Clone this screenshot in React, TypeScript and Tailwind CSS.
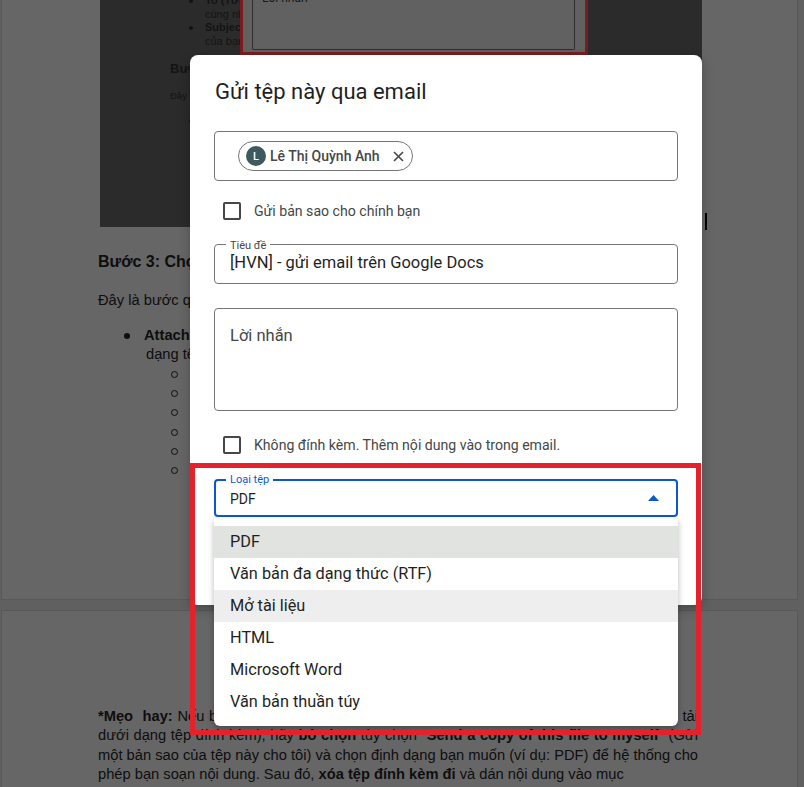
import React from "react";

const menuItems = [
  { label: "PDF", bg: "bg-[#e1e3e1]" },
  { label: "Văn bản đa dạng thức (RTF)", bg: "bg-white" },
  { label: "Mở tài liệu", bg: "bg-[#eeeeee]" },
  { label: "HTML", bg: "bg-white" },
  { label: "Microsoft Word", bg: "bg-white" },
  { label: "Văn bản thuần túy", bg: "bg-white" },
];

function Dot() {
  return <span className="block shrink-0 w-[4px] h-[4px] rounded-full bg-[#141414]" />;
}

function ImageBlock() {
  return (
    <div className="ml-[2px] w-[602px] h-[227px] bg-[#2b2b2b] flex overflow-hidden shrink-0">
      <div className="w-[140px] h-full overflow-hidden pl-[70px] text-[#141414] shrink-0">
        <div className="mt-[-6px] text-[11px] leading-[13.7px] whitespace-nowrap">
          <div className="flex items-center h-[13.7px]">
            <span className="block shrink-0 w-[19px]" />
            <Dot />
            <span className="ml-[12px] shrink-0 font-bold">To (Tới): Nhập địa chỉ email</span>
          </div>
          <div className="h-[13.7px] pl-[35px]">cùng nhận tài liệu</div>
          <div className="flex items-center h-[13.7px]">
            <span className="block shrink-0 w-[19px]" />
            <Dot />
            <span className="ml-[12px] shrink-0 font-bold">Subject (Tiêu đề)</span>
          </div>
          <div className="h-[13.7px] pl-[35px]">của bạn</div>
        </div>
        <div className="mt-[12px] h-[16px] leading-[16px] text-[13px] font-bold whitespace-nowrap">Bước 2: Soạn email</div>
        <div className="mt-[13px] h-[12px] leading-[12px] text-[9.5px] whitespace-nowrap">Đây là nơi bạn nhập nội dung</div>
        <div className="mt-[13px] h-[12px] flex items-center">
          <span className="block shrink-0 w-[19px]" />
          <Dot />
        </div>
      </div>
      <div className="w-[348px] h-[55px] border-[3px] border-t-0 border-[#7a1c20] bg-[#616161] shrink-0">
        <div className="ml-[9px] mr-[10px] h-[50px] border border-t-0 border-[#2e2e2e] rounded-b-[2px] overflow-hidden">
          <div className="mt-[-9px] pl-[9px] text-[12px] leading-[14px] text-[#1a1a1a] font-['Roboto',sans-serif]">Lời nhắn</div>
        </div>
      </div>
    </div>
  );
}

function Checkbox({ label, className }: { label: string; className?: string }) {
  return (
    <div className={`h-[40px] flex items-center pl-[9px] ${className ?? ""}`}>
      <span className="block shrink-0 w-[18px] h-[18px] border-2 border-[#444746] rounded-[2px]" />
      <span className="ml-[13px] text-[14.1px] leading-[20px] text-[#444746]">{label}</span>
    </div>
  );
}

function Dialog() {
  return (
    <div className="absolute left-[190px] top-[55px] w-[512px] h-[550px] bg-white rounded-[8px] px-[24px] font-['Roboto',sans-serif] shadow-[0_4px_12px_rgba(0,0,0,0.25)]">
      <div className="mt-[23px] h-[28px] text-[22px] leading-[28px] text-[#1f1f1f] pl-[1px]">Gửi tệp này qua email</div>

      <div className="mt-[25px] h-[50px] rounded-[4px] border border-[#747775] flex items-center pl-[23px]">
        <div className="flex items-center h-[30px] rounded-full border border-[#747775] pl-[7px] pr-[8px]">
          <div className="w-[20px] h-[20px] rounded-full bg-[#3e5a5f] text-white text-[11px] leading-none flex items-center justify-center font-medium">
            L
          </div>
          <span className="ml-[4px] text-[14px] leading-[20px] font-medium text-[#444746]">Lê Thị Quỳnh Anh</span>
          <svg className="ml-[13px]" width="11" height="11" viewBox="0 0 11 11">
            <path d="M1 1 L10 10 M10 1 L1 10" stroke="#444746" strokeWidth="1.6" />
          </svg>
        </div>
      </div>

      <Checkbox className="mt-[10px]" label="Gửi bản sao cho chính bạn" />

      <div className="relative mt-[13px] h-[40px] rounded-[4px] border border-[#747775] pl-[15px] pt-[8px]">
        <span className="absolute top-[-6px] left-[11px] px-[4px] bg-white text-[11px] leading-[13px] text-[#444746]">Tiêu đề</span>
        <div className="text-[16.5px] leading-[20px] text-[#1f1f1f]">[HVN] - gửi email trên Google Docs</div>
      </div>

      <div className="mt-[24px] h-[103px] rounded-[4px] border border-[#747775] pl-[15px] pt-[17px]">
        <div className="text-[16.5px] leading-[20px] text-[#444746]">Lời nhắn</div>
      </div>

      <Checkbox className="mt-[14px]" label="Không đính kèm. Thêm nội dung vào trong email." />

      <div className="relative mt-[14px]">
        <div className="relative h-[38px] rounded-[4px] border-2 border-[#0b57d0] flex items-center justify-between pl-[14px] pr-[17px]">
          <span className="absolute top-[-8px] left-[10px] px-[4px] bg-white text-[11px] leading-[13px] text-[#0b57d0]">Loại tệp</span>
          <span className="mt-[2px] text-[14px] leading-[20px] text-[#1f1f1f]">PDF</span>
          <svg width="11" height="6" viewBox="0 0 11 6">
            <path d="M0 6 L5.5 0 L11 6 Z" fill="#0b57d0" />
          </svg>
        </div>
        <div className="absolute top-[39px] left-0 w-[464px] bg-white rounded-b-[6px] py-[8px] shadow-[0_3px_6px_rgba(0,0,0,0.28)] z-10">
          {menuItems.map((it) => (
            <div key={it.label} className={`h-[32px] flex items-center pl-[16px] text-[16.3px] text-[#1f1f1f] ${it.bg}`}>
              {it.label}
            </div>
          ))}
        </div>
      </div>
    </div>
  );
}

export default function App() {
  const bodyText = "text-[14.7px] leading-[19.3px] text-[#0e0e0e]";
  return (
    <div className="relative w-[804px] h-[787px] overflow-hidden bg-[#606060] font-['Liberation_Sans',Arial,sans-serif]">
      {/* Page 1 */}
      <div className="ml-[1px] w-[797px] h-[600px] bg-[#666666] border-x border-b border-[#595959] pl-[96px] overflow-hidden">
        <div className="flex items-end">
          <ImageBlock />
          <span className="block ml-[3px] w-[2px] h-[17px] bg-black relative top-[3px]" />
        </div>
        <div className="mt-[25px] h-[20px] leading-[20px] text-[16px] font-bold text-[#0e0e0e] whitespace-nowrap">
          Bước 3: Chọn định dạng tệp đính kèm
        </div>
        <div className="mt-[18px] h-[20px] leading-[20px] text-[14.7px] text-[#0e0e0e] whitespace-nowrap">
          Đây là bước quan trọng để nội dung tài liệu hiển thị đúng trong email.
        </div>
        <div className={`mt-[16px] ${bodyText}`}>
          <div className="flex items-center h-[19.3px]">
            <span className="block shrink-0 w-[26px]" />
            <span className="block shrink-0 w-[6px] h-[6px] rounded-full bg-[#0e0e0e]" />
            <span className="ml-[14px] font-bold whitespace-nowrap">Attachment (Tệp đính kèm):</span>
          </div>
          <div className="h-[19.3px] pl-[48px] whitespace-nowrap">dạng tệp mà bạn muốn gửi:</div>
          {["PDF", "Văn bản đa dạng thức (RTF)", "Mở tài liệu", "HTML", "Microsoft Word", "Văn bản thuần túy"].map((t) => (
            <div key={t} className="flex items-center h-[19.3px]">
              <span className="block shrink-0 w-[73px]" />
              <span className="block shrink-0 w-[7px] h-[7px] rounded-full border border-[#0e0e0e]" />
              <span className="ml-[13px] whitespace-nowrap">{t}</span>
            </div>
          ))}
        </div>
      </div>

      {/* Page 2 */}
      <div className="mt-[10px] ml-[1px] w-[797px] h-[200px] bg-[#666666] border border-[#595959] pl-[96px] pt-[96px]">
        <div className={`w-[600px] ${bodyText}`}>
          <div className="h-[19.3px] overflow-hidden text-justify [text-align-last:justify]">
            <b>*Mẹo&nbsp; hay:</b> Nếu bạn muốn gửi nội dung tài liệu ngay trong phần thân của email (thay vì tải
          </div>
          <div className="h-[19.3px] overflow-hidden text-justify [text-align-last:justify]">
            dưới dạng tệp đính kèm), hãy <b>bỏ chọn</b> tùy chọn "<b>Send a copy of this file to myself</b>" (Gửi
          </div>
          <div className="h-[19.3px] overflow-hidden text-justify [text-align-last:justify]">
            một bản sao của tệp này cho tôi) và chọn định dạng bạn muốn (ví dụ: PDF) để hệ thống cho
          </div>
          <div className="h-[19.3px] overflow-hidden whitespace-nowrap">
            phép bạn soạn nội dung. Sau đó, <b>xóa tệp đính kèm đi</b> và dán nội dung vào mục
          </div>
        </div>
      </div>

      <Dialog />

      {/* Red annotation frame */}
      <div className="absolute left-[190px] top-[463px] w-[511px] h-[272px] border-[5px] border-[#e3222b] pointer-events-none z-20" />
    </div>
  );
}
